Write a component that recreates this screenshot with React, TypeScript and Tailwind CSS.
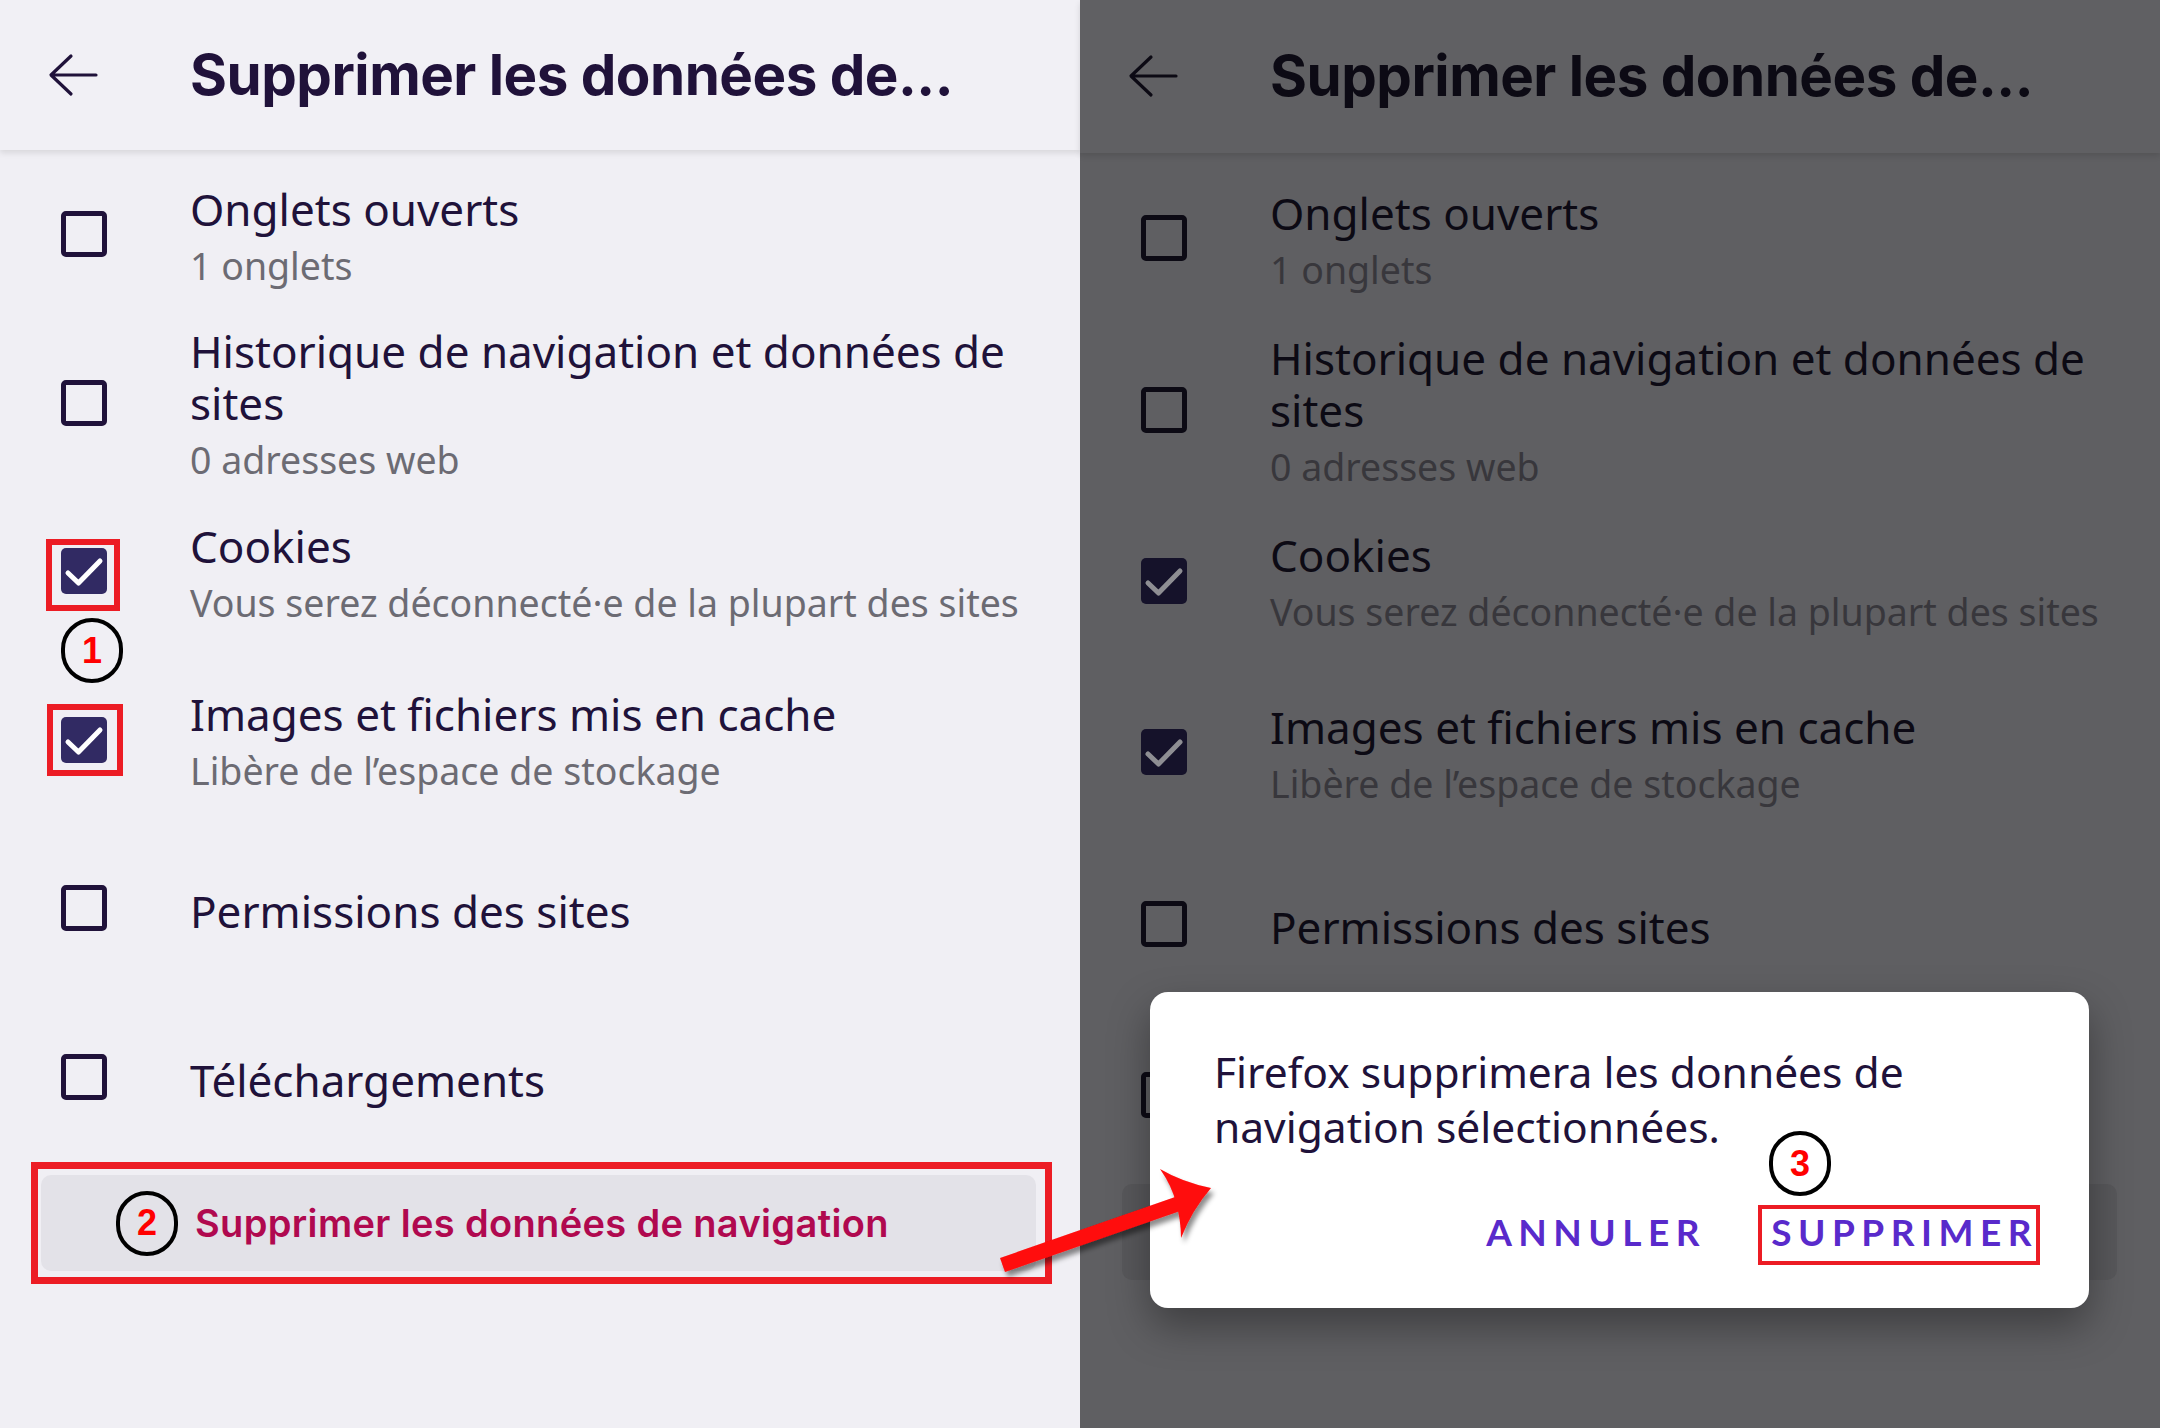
import React from "react";

type Tone = "light" | "dim";

type Item = { title: string; sub?: string; checked?: boolean; covered?: boolean };

const items: Item[] = [
  { title: "Onglets ouverts", sub: "1 onglets" },
  { title: "Historique de navigation et données de sites", sub: "0 adresses web" },
  { title: "Cookies", sub: "Vous serez déconnecté·e de la plupart des sites", checked: true },
  { title: "Images et fichiers mis en cache", sub: "Libère de l’espace de stockage", checked: true },
  { title: "Permissions des sites" },
  { title: "Téléchargements", covered: true },
];

const tones = {
  light: {
    page: "bg-[#f0eff4]",
    header: "h-[150px] bg-[#f1f0f5] shadow-[0_3px_6px_rgba(0,0,0,0.10)]",
    row: "h-[168.5px]",
    ink: "text-[#20123a]",
    sub: "text-[#6c6b73]",
    box: "border-[#20123a]",
    boxOn: "bg-[#312a63]",
    check: "#ffffff",
    btn: "bg-[#e3e2e8]",
    btnText: "text-[#b0094f]",
    stroke: "#20123a",
  },
  dim: {
    page: "bg-[#5f5f62]",
    header: "h-[152.5px] bg-[#606063] shadow-[0_3px_6px_rgba(0,0,0,0.12)]",
    row: "h-[171.4px]",
    ink: "text-[#0c0a14]",
    sub: "text-[#38373c]",
    box: "border-[#0c0a14]",
    boxOn: "bg-[#15122a]",
    check: "#8e8e93",
    btn: "bg-[#58585b]",
    btnText: "text-[#470220]",
    stroke: "#0c0a14",
  },
};

function Badge({ n }: { n: number }) {
  return (
    <div className="flex h-[65px] w-[62px] items-center justify-center rounded-full border-[4px] border-black font-['Liberation_Sans',sans-serif] text-[36px] font-bold leading-none text-[#ff0000]">
      {n}
    </div>
  );
}

function CheckBox({ checked, tone }: { checked?: boolean; tone: Tone }) {
  const t = tones[tone];
  if (checked) {
    return (
      <div className={`h-[46px] w-[46px] rounded-[5px] ${t.boxOn}`}>
        <svg viewBox="0 0 46 46" className="h-full w-full">
          <path d="M7 25 L17.5 35 L39 13" fill="none" stroke={t.check} strokeWidth="5" strokeLinecap="round" strokeLinejoin="round" />
        </svg>
      </div>
    );
  }
  return <div className={`h-[46px] w-[46px] rounded-[5px] border-[5px] ${t.box}`} />;
}

function Row({ item, tone, index }: { item: Item; tone: Tone; index: number }) {
  const t = tones[tone];
  const marked = tone === "light" && item.checked;
  const hidden = tone === "dim" && item.covered;
  return (
    <div className={`flex items-center pl-[61px] pr-[40px] ${t.row}`}>
      <div className="relative shrink-0">
        <CheckBox checked={item.checked} tone={tone} />
        {marked && index === 2 && (
          <>
            <div className="absolute left-[-15px] top-[-9px] h-[72px] w-[74px] border-[6px] border-[#ec1c24]" />
            <div className="absolute left-0 top-[70px]">
              <Badge n={1} />
            </div>
          </>
        )}
        {marked && index === 3 && (
          <div className="absolute left-[-14px] top-[-13px] h-[72px] w-[76px] border-[6px] border-[#ec1c24]" />
        )}
      </div>
      {!hidden && (
        <div className="ml-[83px] flex flex-col pt-[6px] font-['Noto_Sans',sans-serif]">
          <div className={`text-[44px] leading-[52px] ${t.ink}`}>{item.title}</div>
          {item.sub && <div className={`mt-[5px] text-[37.5px] leading-[52px] ${t.sub}`}>{item.sub}</div>}
        </div>
      )}
    </div>
  );
}

function ClearButton({ tone }: { tone: Tone }) {
  const t = tones[tone];
  return (
    <div className={`flex h-[96px] items-center gap-[17px] rounded-[10px] pl-[75px] ${t.btn}`}>
      {tone === "light" && (
        <>
          <Badge n={2} />
          <span className={`font-['Inter',sans-serif] text-[38px] font-semibold leading-[44px] tracking-[0.35px] ${t.btnText}`}>
            Supprimer les données de navigation
          </span>
        </>
      )}
    </div>
  );
}

function Screen({ tone }: { tone: Tone }) {
  const t = tones[tone];
  return (
    <div className={`relative flex h-full w-[1080px] shrink-0 flex-col ${t.page}`}>
      <div className={`relative z-10 flex shrink-0 items-center pl-[48px] ${t.header}`}>
        <svg viewBox="0 0 50 44" className="h-[44px] w-[50px]">
          <path d="M48 22 H4 M23 3 L3 22 L23 41" fill="none" stroke={t.stroke} strokeWidth="3.2" strokeLinecap="round" strokeLinejoin="round" />
        </svg>
        <h1 className={`ml-[92px] font-['Inter',sans-serif] text-[56.5px] font-bold leading-[66px] tracking-[-0.5px] ${t.ink}`}>
          Supprimer les données de...
        </h1>
      </div>
      {items.map((it, i) => (
        <Row key={it.title} item={it} tone={tone} index={i} />
      ))}
      {tone === "light" ? (
        <div className="ml-[31px] mt-[1px] w-[1021px] border-[7px] border-[#ec1c24] py-[6px] pl-[3px] pr-[9px]">
          <ClearButton tone={tone} />
        </div>
      ) : (
        <div className="ml-[42px] mt-[3px] w-[995px]">
          <ClearButton tone={tone} />
        </div>
      )}
    </div>
  );
}

function Dialog() {
  return (
    <div className="absolute left-[70px] top-[992px] h-[316px] w-[939px] rounded-[18px] bg-white pl-[64px] pr-[51px] pt-[52px] shadow-[0_18px_40px_rgba(0,0,0,0.35)]">
      <p className="font-['Noto_Sans',sans-serif] text-[42.5px] leading-[55px] text-[#20123a]">
        Firefox supprimera les données de
        <br />
        navigation sélectionnées.
      </p>
      <div className="mt-[56px] flex justify-end gap-[65px] font-['Lato',sans-serif] text-[37px] font-bold leading-[44px] tracking-[6.5px] text-[#592acb]">
        <span>ANNULER</span>
        <span className="relative">
          SUPPRIMER
          <div className="absolute left-[-13px] top-[-5px] h-[60px] w-[282px] border-[4px] border-[#ec1c24]" />
          <div className="absolute left-[-2px] top-[-79px] tracking-normal">
            <Badge n={3} />
          </div>
        </span>
      </div>
    </div>
  );
}

function PointerArrow() {
  return (
    <svg viewBox="990 1160 240 120" className="pointer-events-none absolute left-[990px] top-[1160px] h-[120px] w-[240px]">
      <defs>
        <filter id="arrowShadow" x="-20%" y="-20%" width="140%" height="160%">
          <feDropShadow dx="3" dy="5" stdDeviation="2.5" floodColor="#000" floodOpacity="0.45" />
        </filter>
      </defs>
      <g filter="url(#arrowShadow)" fill="#ff0a0a">
        <path d="M1000 1258 L1178 1196 L1183 1210 L1005 1272 Z" />
        <path d="M1211 1188 Q1182 1182 1160 1169 Q1172 1186 1176 1203 Q1181 1220 1181 1238 Q1192 1210 1211 1188 Z" />
      </g>
    </svg>
  );
}

export default function App() {
  return (
    <div className="relative flex h-[1428px] w-[2160px] overflow-hidden">
      <Screen tone="light" />
      <div className="relative h-full w-[1080px] shrink-0">
        <Screen tone="dim" />
        <Dialog />
      </div>
      <PointerArrow />
    </div>
  );
}
